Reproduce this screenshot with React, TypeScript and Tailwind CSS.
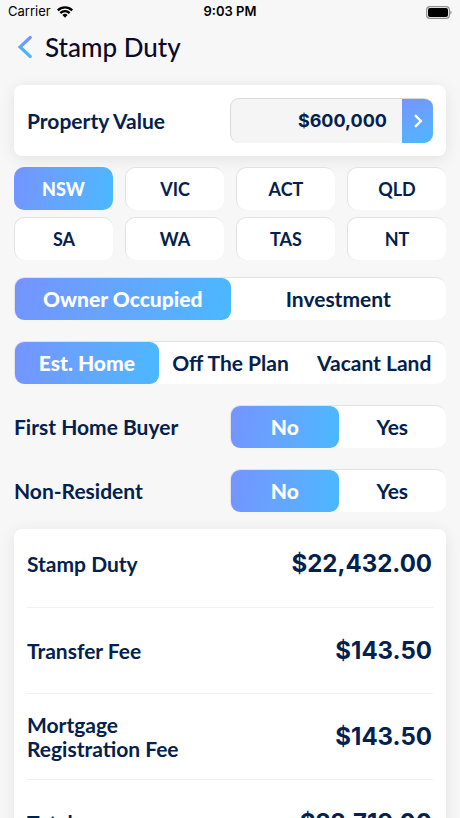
import { useState } from "react";
import type { FormEvent } from "react";
import clsx from "clsx";

const STATES = ["NSW", "VIC", "ACT", "QLD", "SA", "WA", "TAS", "NT"];

const FEES = [
  { label: "Stamp Duty", amount: 22432 },
  { label: "Transfer Fee", amount: 143.5 },
  { label: "Mortgage Registration Fee", amount: 143.5 },
];

const formatMoney = (value: number) =>
  "$" +
  value.toLocaleString("en-US", {
    minimumFractionDigits: 2,
    maximumFractionDigits: 2,
  });

function StatusBar() {
  return (
    <div className="grid h-6 shrink-0 grid-cols-3 items-center px-2 font-['Inter',sans-serif] text-[13px] text-black">
      <div className="flex items-center gap-1.5">
        <span>Carrier</span>
        <svg width="16" height="12" viewBox="0 0 16 12" aria-hidden="true">
          <g fill="none" stroke="currentColor" strokeWidth="2.3">
            <path d="M0.8 4.4a10.2 10.2 0 0 1 14.4 0" />
            <path d="M3.3 7.1a6.6 6.6 0 0 1 9.4 0" />
          </g>
          <path d="M8 11.8 5.4 9.1a3.7 3.7 0 0 1 5.2 0z" fill="currentColor" />
        </svg>
      </div>
      <span className="text-center font-semibold">9:03 PM</span>
      <svg
        className="justify-self-end"
        width="26"
        height="13"
        viewBox="0 0 26 13"
        aria-hidden="true"
      >
        <rect x="0.6" y="0.6" width="22.8" height="11.8" rx="3.4" fill="none" stroke="#8f8f8f" strokeWidth="1.2" />
        <rect x="2" y="2" width="20" height="9" rx="2" fill="#000" />
        <path d="M24.4 4.5c1.6.6 1.6 3.4 0 4z" fill="#8f8f8f" />
      </svg>
    </div>
  );
}

interface SegmentedProps {
  label: string;
  options: string[];
  value: string;
  onChange: (value: string) => void;
}

function Segmented({ label, options, value, onChange }: SegmentedProps) {
  return (
    <div
      role="group"
      aria-label={label}
      className="flex h-[43px] rounded-[10px] border-t border-l border-[#e2e2e2] bg-white"
    >
      {options.map((option) => (
        <button
          key={option}
          type="button"
          aria-pressed={option === value}
          onClick={() => onChange(option)}
          className={clsx(
            "flex-1 basis-0 rounded-[9px] text-[21px] whitespace-nowrap",
            option === value
              ? "bg-linear-100 from-[#7494ff] to-[#49b8ff] font-black text-white"
              : "font-bold"
          )}
        >
          {option}
        </button>
      ))}
    </div>
  );
}

export default function App() {
  const [propertyValue, setPropertyValue] = useState("$600,000");
  const [state, setState] = useState("NSW");
  const [purpose, setPurpose] = useState("Owner Occupied");
  const [propertyType, setPropertyType] = useState("Est. Home");
  const [firstHome, setFirstHome] = useState("No");
  const [nonResident, setNonResident] = useState("No");

  const total = FEES.reduce((sum, fee) => sum + fee.amount, 0);

  const handleSubmit = (e: FormEvent) => {
    e.preventDefault();
  };

  return (
    <div className="flex h-screen flex-col bg-[#f7f7f7] font-['Lato',sans-serif] text-[#04214d]">
      <StatusBar />

      <header className="flex h-[46px] shrink-0 items-center gap-3 px-[18px]">
        <button type="button" aria-label="Back">
          <svg width="15" height="24" viewBox="0 0 15 24" fill="none">
            <defs>
              <linearGradient id="back" x1="0" y1="0" x2="0" y2="1">
                <stop offset="0" stopColor="#7494ff" />
                <stop offset="1" stopColor="#49b8ff" />
              </linearGradient>
            </defs>
            <path d="M12.2 2.5 2 12l10.2 9.5" stroke="url(#back)" strokeWidth="3.2" strokeLinecap="round" />
          </svg>
        </button>
        <h1 className="text-[26px] font-medium text-[#0c0a2c]">Stamp Duty</h1>
      </header>

      <main className="min-h-0 flex-1 overflow-y-auto px-[14px] pt-[15px] [scrollbar-width:none]">
        {/* Property value */}
        <form
          onSubmit={handleSubmit}
          className="grid grid-cols-2 items-center rounded-lg bg-white p-[13px] shadow-[0_3px_16px_rgba(0,0,0,0.09)]"
        >
          <label htmlFor="property-value" className="text-[21px] leading-6 font-bold">
            Property Value
          </label>
          <div className="flex h-[45px] overflow-hidden rounded-[9px] border-t border-l border-[#d9d9d9] bg-[#f5f5f5]">
            <input
              id="property-value"
              type="text"
              inputMode="numeric"
              value={propertyValue}
              onChange={(e) => setPropertyValue(e.target.value)}
              className="min-w-0 flex-1 bg-transparent pr-[15px] text-right font-['Inter',sans-serif] text-lg font-bold outline-none"
            />
            <button
              type="submit"
              aria-label="Calculate"
              className="flex w-[31px] items-center justify-center bg-linear-160 from-[#7494ff] to-[#49b8ff] text-white"
            >
              <svg width="10" height="14" viewBox="0 0 10 14" fill="none">
                <path d="M2 1.2 7.8 7 2 12.8" stroke="currentColor" strokeWidth="2.4" />
              </svg>
            </button>
          </div>
        </form>

        {/* State picker */}
        <div role="group" aria-label="State" className="mt-[11px] grid grid-cols-4 gap-x-3 gap-y-[7px]">
          {STATES.map((name) => (
            <button
              key={name}
              type="button"
              aria-pressed={name === state}
              onClick={() => setState(name)}
              className={clsx(
                "h-[43px] rounded-[10px] text-lg",
                name === state
                  ? "bg-linear-100 from-[#7494ff] to-[#49b8ff] font-black text-white"
                  : "border-t border-l border-[#e2e2e2] bg-white font-bold"
              )}
            >
              {name}
            </button>
          ))}
        </div>

        <div className="mt-[17px] flex flex-col gap-[21px]">
          <Segmented
            label="Purpose"
            options={["Owner Occupied", "Investment"]}
            value={purpose}
            onChange={setPurpose}
          />
          <Segmented
            label="Property type"
            options={["Est. Home", "Off The Plan", "Vacant Land"]}
            value={propertyType}
            onChange={setPropertyType}
          />
          <div className="grid grid-cols-2 items-center">
            <span className="text-[21px] leading-6 font-bold">First Home Buyer</span>
            <Segmented
              label="First Home Buyer"
              options={["No", "Yes"]}
              value={firstHome}
              onChange={setFirstHome}
            />
          </div>
          <div className="grid grid-cols-2 items-center">
            <span className="text-[21px] leading-6 font-bold">Non-Resident</span>
            <Segmented
              label="Non-Resident"
              options={["No", "Yes"]}
              value={nonResident}
              onChange={setNonResident}
            />
          </div>
        </div>

        {/* Results */}
        <dl className="mt-[17px] mb-6 rounded-lg bg-white px-[13px] pb-4 shadow-[0_3px_16px_rgba(0,0,0,0.09)]">
          {FEES.map((fee) => (
            <div
              key={fee.label}
              className="flex h-[86px] items-center justify-between border-b border-[#f0f0f0] first:h-[79px] first:pb-2"
            >
              <dt className="w-44 text-[21px] leading-6 font-bold">{fee.label}</dt>
              <dd className="pr-px font-['Inter',sans-serif] text-2xl font-bold">
                {formatMoney(fee.amount)}
              </dd>
            </div>
          ))}
          <div className="flex h-[86px] items-center justify-between">
            <dt className="text-[21px] leading-6 font-bold">Total</dt>
            <dd className="pr-px font-['Inter',sans-serif] text-2xl font-bold">
              {formatMoney(total)}
            </dd>
          </div>
        </dl>
      </main>
    </div>
  );
}
